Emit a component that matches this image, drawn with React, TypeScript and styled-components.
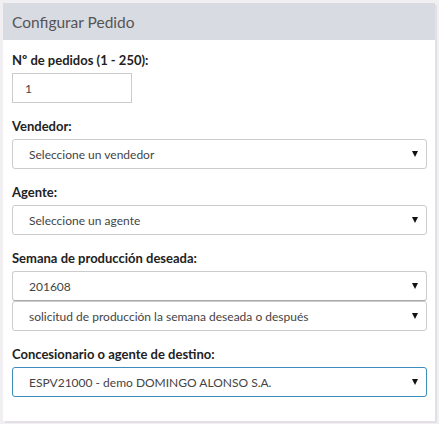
import React from 'react'
import styled, { createGlobalStyle } from "styled-components";

const GlobalStyle = createGlobalStyle`
  body {
    margin: 0;
    background: #f1eff1;
    font-family: Lato, "Open Sans", sans-serif;
    color: #333;
  }
`;

interface SelectProps {
  value: string;
  focused?: boolean;
  joined?: boolean;
}

const FakeSelect = ({ value, focused, joined }: SelectProps) => (
  <SelectBox $focused={focused} $joined={joined}>
    <SelectText>{value}</SelectText>
    <Caret />
  </SelectBox>
);

export default function App() {
  return (
    <>
      <GlobalStyle />
      <Page>
        <Panel>
          <Header>Configurar Pedido</Header>
          <Body>
            <Field>
              <Label>Nº de pedidos (1 - 250):</Label>
              <NumberInput>1</NumberInput>
            </Field>
            <Field>
              <Label>Vendedor:</Label>
              <FakeSelect value="Seleccione un vendedor" />
            </Field>
            <Field>
              <Label>Agente:</Label>
              <FakeSelect value="Seleccione un agente" />
            </Field>
            <Field>
              <Label>Semana de producción deseada:</Label>
              <FakeSelect value="201608" joined />
              <FakeSelect value="solicitud de producción la semana deseada o después" />
            </Field>
            <Field>
              <Label>Concesionario o agente de destino:</Label>
              <FakeSelect value="ESPV21000 - demo DOMINGO ALONSO S.A." focused />
            </Field>
          </Body>
        </Panel>
      </Page>
    </>
  );
}

const Page = styled.div`
  padding: 3px;
  height: 424px;
  box-sizing: border-box;
`;

const Panel = styled.div`
  width: 432px;
  background: #fff;
  box-shadow: 2px 2px 0 #e2e0e4;
`;

const Header = styled.div`
  height: 37px;
  display: flex;
  align-items: center;
  padding-left: 9px;
  background: #d9dbe3;
  color: #555;
  font-size: 15.5px;
`;

const Body = styled.div`
  padding: 11px 8px 10px 9px;
`;

const Field = styled.div`
  margin-bottom: 14px;
`;

const Label = styled.label`
  display: block;
  font-size: 13px;
  font-weight: bold;
  line-height: 18px;
  margin-bottom: 4px;
  color: #222;
`;

const NumberInput = styled.div`
  width: 120px;
  height: 30px;
  box-sizing: border-box;
  border: 1px solid #ccc;
  padding-left: 12px;
  display: flex;
  align-items: center;
  font-size: 12px;
  color: #444;
`;

const SelectBox = styled.div<{ $focused?: boolean; $joined?: boolean }>`
  height: 30px;
  box-sizing: border-box;
  display: flex;
  align-items: center;
  justify-content: space-between;
  padding: 0 8px 0 16px;
  border: 1px solid ${(p) => (p.$focused ? "#3c8dbc" : "#ccc")};
  border-bottom-color: ${(p) => (p.$focused ? "#3c8dbc" : p.$joined ? "#aaa" : "#ccc")};
  border-radius: 3px;
  background: #fff;
`;

const SelectText = styled.span`
  font-size: 12px;
  color: #444;
  white-space: nowrap;
`;

const Caret = styled.span`
  width: 0;
  height: 0;
  border-left: 3.5px solid transparent;
  border-right: 3.5px solid transparent;
  border-top: 6px solid #111;
`;
